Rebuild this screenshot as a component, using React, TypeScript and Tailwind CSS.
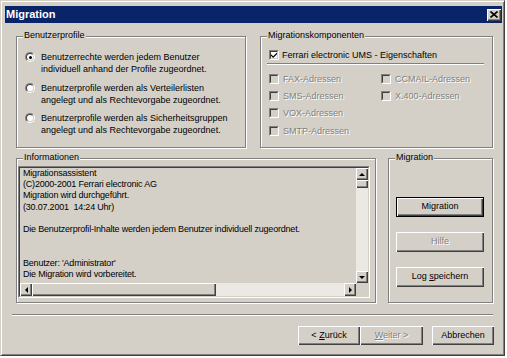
import React from "react";

const etched = "border border-[#808080] shadow-[inset_1px_1px_0_#fff,1px_1px_0_#fff]";
const raised = "bg-[#d4d0c8] shadow-[inset_1px_1px_0_#fff,inset_-1px_-1px_0_#404040,inset_-2px_-2px_0_#808080]";
const disabledText = "text-[#808080] [text-shadow:1px_1px_0_#fff]";

function Group({ label, className, children }: { label: string; className: string; children?: React.ReactNode }) {
  return (
    <div className={`relative ${etched} ${className}`}>
      <span className="absolute left-[6px] top-[-7px] px-[1px] bg-[#d4d0c8] leading-[11px] whitespace-nowrap">{label}</span>
      {children}
    </div>
  );
}

function Radio({ checked }: { checked?: boolean }) {
  return (
    <span className="mt-[1px] w-[10px] h-[10px] shrink-0 rounded-full border border-t-[#808080] border-l-[#808080] border-r-white border-b-white">
      <span className="flex w-full h-full items-center justify-center rounded-full bg-white border border-t-[#404040] border-l-[#404040] border-r-[#d4d0c8] border-b-[#d4d0c8]">
        {checked && <span className="w-[3px] h-[3px] rounded-full bg-black" />}
      </span>
    </span>
  );
}

function Check({ checked, disabled }: { checked?: boolean; disabled?: boolean }) {
  return (
    <span className="w-[10px] h-[10px] shrink-0 border border-t-[#808080] border-l-[#808080] border-r-white border-b-white">
      <span
        className={`flex w-full h-full items-center justify-center border border-t-[#404040] border-l-[#404040] border-r-[#d4d0c8] border-b-[#d4d0c8] ${
          disabled ? "bg-[#d4d0c8]" : "bg-white"
        }`}
      >
        {checked && (
          <svg width="6" height="6" viewBox="0 0 7 7">
            <path d="M0 2.5L2.5 5L7 0.5V2.5L2.5 7L0 4.5Z" fill="#000" />
          </svg>
        )}
      </span>
    </span>
  );
}

function ArrowV({ dir }: { dir: "up" | "down" }) {
  return (
    <span className={`flex w-full h-[12px] shrink-0 items-center justify-center ${raised}`}>
      <svg width="6" height="3" viewBox="0 0 6 3">
        <polygon points={dir === "up" ? "0,3 3,0 6,3" : "0,0 6,0 3,3"} fill="#000" />
      </svg>
    </span>
  );
}

function ArrowH({ dir }: { dir: "left" | "right" }) {
  return (
    <span className={`flex w-[12px] h-full shrink-0 items-center justify-center ${raised}`}>
      <svg width="3" height="6" viewBox="0 0 3 6">
        <polygon points={dir === "left" ? "3,0 3,6 0,3" : "0,0 0,6 3,3"} fill="#000" />
      </svg>
    </span>
  );
}

function Btn({
  children,
  className = "",
  def,
  disabled,
}: {
  children: React.ReactNode;
  className?: string;
  def?: boolean;
  disabled?: boolean;
}) {
  return (
    <div
      className={`flex items-center justify-center ${raised} ${def ? "border border-black" : ""} ${
        disabled ? disabledText : ""
      } ${className}`}
    >
      {children}
    </div>
  );
}

const infoText = `Migrationsassistent
(C)2000-2001 Ferrari electronic AG
Migration wird durchgeführt.
(30.07.2001  14:24 Uhr)

Die Benutzerprofil-Inhalte werden jedem Benutzer individuell zugeordnet.


Benutzer: 'Administrator'
Die Migration wird vorbereitet.`;

export default function App() {
  return (
    <div className="w-[507px] h-[358px] bg-white font-['Liberation_Sans',Arial,sans-serif] text-[9px] text-black">
      <div className="w-[505px] h-[356px] bg-[#d4d0c8] border border-t-[#d4d0c8] border-l-[#d4d0c8] border-r-[#404040] border-b-[#404040] shadow-[inset_1px_1px_0_#fff,inset_-1px_-1px_0_#808080] pl-[4px] pr-[2px] pt-[5px] flex flex-col">
        {/* Title bar */}
        <div className="h-[17px] bg-[#0a246a] flex items-center justify-between">
          <span className="text-white font-bold text-[11px] leading-[17px] pl-[1px]">Migration</span>
          <span className={`mr-[1px] w-[14px] h-[12px] flex items-center justify-center ${raised}`}>
            <svg width="8" height="7" viewBox="0 0 8 7">
              <path d="M0.5 0.5L7.5 6.5M7.5 0.5L0.5 6.5" stroke="#000" strokeWidth="1.6" />
            </svg>
          </span>
        </div>

        {/* Row 1 */}
        <div className="mt-[13px] ml-[11px] flex gap-[14px]">
          <Group label="Benutzerprofile" className="w-[230px] h-[112px]">
            <div className="pt-[14px] pl-[8px] flex flex-col gap-[6.5px]">
              <div className="flex gap-[6px]">
                <Radio checked />
                <span className="leading-[12px]">
                  Benutzerrechte werden jedem Benutzer
                  <br />
                  individuell anhand der Profile zugeordnet.
                </span>
              </div>
              <div className="flex gap-[6px]">
                <Radio />
                <span className="leading-[12px]">
                  Benutzerprofile werden als Verteilerlisten
                  <br />
                  angelegt und als Rechtevorgabe zugeordnet.
                </span>
              </div>
              <div className="flex gap-[6px]">
                <Radio />
                <span className="leading-[12px]">
                  Benutzerprofile werden als Sicherheitsgruppen
                  <br />
                  angelegt und als Rechtevorgabe zugeordnet.
                </span>
              </div>
            </div>
          </Group>

          <Group label="Migrationskomponenten" className="w-[233px] h-[112px]">
            <div className="pt-[12px] flex flex-col">
              <div className="flex items-center h-[12px] pl-[8px] gap-[3px]">
                <Check checked />
                <span className="leading-[12px]">Ferrari electronic UMS - Eigenschaften</span>
              </div>
              <div className="mt-[2px] ml-[6px] w-[217px] h-[2px] border-t border-t-[#808080] border-b border-b-white" />
              <div className="mt-[5px] pl-[8px] grid grid-cols-[112px_1fr]">
                {[
                  "FAX-Adressen",
                  "CCMAIL-Adressen",
                  "SMS-Adressen",
                  "X.400-Adressen",
                  "VOX-Adressen",
                  "",
                  "SMTP-Adressen",
                  "",
                ].map((t, i) => (
                  <div key={i} className="h-[17.3px] flex items-center gap-[4px]">
                    {t && (
                      <>
                        <Check disabled />
                        <span className={`leading-[12px] ${disabledText}`}>{t}</span>
                      </>
                    )}
                  </div>
                ))}
              </div>
            </div>
          </Group>
        </div>

        {/* Row 2 */}
        <div className="mt-[10px] ml-[11px] flex gap-[12px]">
          <Group label="Informationen" className="w-[360px] h-[145px]">
            <div className="ml-[1px] mt-[7px] w-[352px] h-[132px] border border-t-[#808080] border-l-[#808080] border-r-white border-b-white">
              <div className="w-full h-full border border-t-[#404040] border-l-[#404040] border-r-[#d4d0c8] border-b-[#d4d0c8] grid grid-cols-[minmax(0,1fr)_12px] grid-rows-[minmax(0,1fr)_13px]">
                <div className="pl-[3px] overflow-hidden whitespace-pre leading-[11.2px] tracking-[-0.2px]">{infoText}</div>
                <div className="flex flex-col min-h-0">
                  <ArrowV dir="up" />
                  <div className={`h-[8px] shrink-0 ${raised}`} />
                  <div className="flex-1 bg-[#ebe9e4]" />
                  <ArrowV dir="down" />
                </div>
                <div className="flex">
                  <ArrowH dir="left" />
                  <div className={`w-[184px] shrink-0 ${raised}`} />
                  <div className="flex-1 bg-[#ebe9e4]" />
                  <ArrowH dir="right" />
                </div>
                <div className="bg-[#d4d0c8]" />
              </div>
            </div>
          </Group>

          <Group label="Migration" className="w-[105px] h-[145px]">
            <div className="ml-[7px] mt-[38px] flex flex-col gap-[15px]">
              <Btn def className="w-[88px] h-[20px]">
                Migration
              </Btn>
              <Btn disabled className="w-[88px] h-[20px]">
                Hilfe
              </Btn>
              <Btn className="w-[88px] h-[20px]">
                <span>
                  Log <span className="underline">s</span>peichern
                </span>
              </Btn>
            </div>
          </Group>
        </div>

        {/* Separator */}
        <div className="mt-[11px] ml-[7px] w-[481px] h-[2px] border-t border-t-[#808080] border-b border-b-white" />

        {/* Bottom buttons */}
        <div className="mt-[10px] flex justify-end pr-[8px]">
          <Btn className="w-[62px] h-[19px]">
            <span>
              &lt; <span className="underline">Z</span>urück
            </span>
          </Btn>
          <Btn disabled className="w-[63px] h-[19px]">
            <span>
              <span className="underline">W</span>eiter &gt;
            </span>
          </Btn>
          <Btn className="ml-[9px] w-[62px] h-[19px]">Abbrechen</Btn>
        </div>
      </div>
    </div>
  );
}
